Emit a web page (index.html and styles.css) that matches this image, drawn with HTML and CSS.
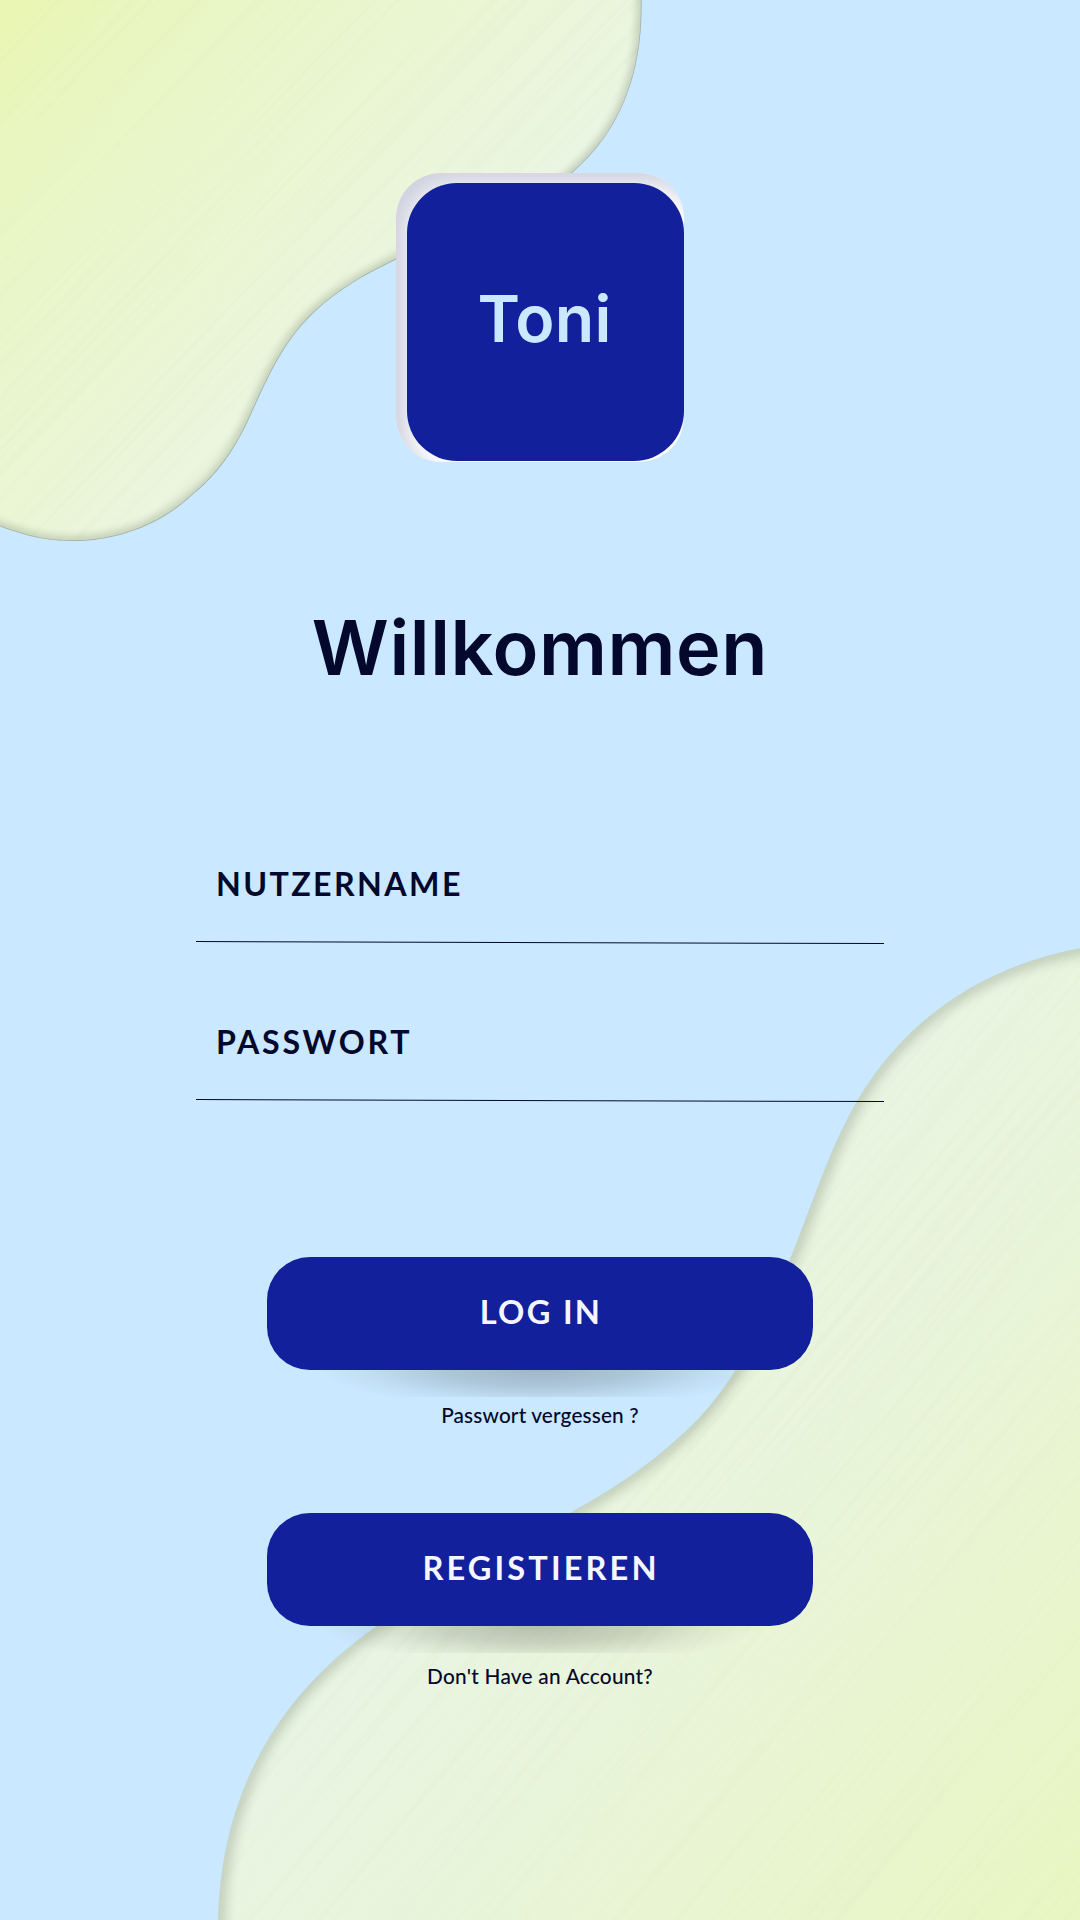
FILE: index.html
```html
<!DOCTYPE html>
<html lang="de">
<head>
  <meta charset="utf-8">
  <title>Toni – Willkommen</title>
  <link rel="stylesheet" href="styles.css">
</head>
<body>
  <svg class="backdrop" viewBox="0 0 1080 1920" aria-hidden="true">
    <defs>
      <linearGradient id="fill-top" gradientUnits="userSpaceOnUse" x1="0" y1="30" x2="390" y2="400">
        <stop offset="0" stop-color="#e9f6b4"/>
        <stop offset=".25" stop-color="#e9f6c4"/>
        <stop offset=".6" stop-color="#ebf6d4"/>
        <stop offset="1" stop-color="#eaf6e5"/>
      </linearGradient>
      <linearGradient id="fill-bottom" gradientUnits="userSpaceOnUse" x1="560" y1="1430" x2="1090" y2="1880">
        <stop offset="0" stop-color="#e9f5e3"/>
        <stop offset=".45" stop-color="#e9f5d6"/>
        <stop offset="1" stop-color="#e8f6c3"/>
      </linearGradient>
      <path id="blob-top" d="M-20 -20 H641.500 V0 C643 72 621 131 572 173 C520 219 447 236 395 260 C361 276 329 295 303.500 323 C276 354 262 391 246 425 C229 459 213 478 191 496 C158 527 113 541 74 541 C48 541 23 537 -20 518 Z"/>
      <path id="blob-bottom" d="M1100 945 C1018 956 948 991 897 1047 C841 1107 823 1178 789 1262 C764 1325 736 1378 700 1417 C660 1458 622 1484 570 1513 C500 1549 434 1582 377 1626 C275 1697 221 1796 218 1920 V1940 H1100 Z"/>
      <clipPath id="clip-top"><use href="#blob-top"/></clipPath>
      <clipPath id="clip-bottom"><use href="#blob-bottom"/></clipPath>
      <filter id="soft-top" x="-10%" y="-10%" width="120%" height="120%"><feGaussianBlur stdDeviation="4"/></filter>
      <filter id="soft-bottom" x="-10%" y="-10%" width="120%" height="120%"><feGaussianBlur stdDeviation="6.500"/></filter>
      <filter id="streaks" x="0" y="0" width="100%" height="100%">
        <feTurbulence type="fractalNoise" baseFrequency="0.0015 0.17" numOctaves="3" seed="7"/>
        <feColorMatrix values="0 0 0 0 .66  0 0 0 0 .74  0 0 0 0 .5  1.600 0 0 0 -.78"/>
      </filter>
    </defs>
    <g clip-path="url(#clip-top)">
      <use href="#blob-top" fill="url(#fill-top)"/>
      <rect class="grain" x="-700" y="-500" width="1400" height="1100" transform="rotate(-46)" filter="url(#streaks)"/>
      <use href="#blob-top" class="rim rim-top" filter="url(#soft-top)"/>
      <use href="#blob-top" class="edge"/>
    </g>
    <g clip-path="url(#clip-bottom)">
      <use href="#blob-bottom" fill="url(#fill-bottom)"/>
      <rect class="grain" x="-800" y="-600" width="1600" height="1200" transform="translate(760 1500) rotate(-50)" filter="url(#streaks)"/>
      <use href="#blob-bottom" class="rim rim-bottom" filter="url(#soft-bottom)"/>
    </g>
  </svg>

  <main class="screen">
    <div class="logo"><div class="logo-face">Toni</div></div>
    <h1 class="title">Willkommen</h1>

    <form class="form">
      <label class="field field-user">Nutzername</label>
      <label class="field field-pass">Passwort</label>

      <button class="button button-login" type="button">Log in</button>
      <a class="hint hint-forgot">Passwort vergessen ?</a>
      <button class="button button-register" type="button">Registieren</button>
      <a class="hint hint-account">Don't Have an Account?</a>
    </form>
  </main>
</body>
</html>
```
FILE: styles.css
```css
* { box-sizing: border-box; }

body {
  margin: 0;
  width: 1080px;
  height: 1920px;
  overflow: hidden;
  position: relative;
  background: #cae8ff;
  color: #03082c;
  font-family: Lato, "Open Sans", sans-serif;
}

.backdrop {
  position: absolute;
  inset: 0;
  width: 1080px;
  height: 1920px;
}

.grain { opacity: .24; }
.rim { fill: none; stroke: #4d5b4b; }
.rim-top { stroke-width: 6px; opacity: .38; }
.rim-bottom { stroke-width: 10px; opacity: .36; }
.edge { fill: none; stroke: #7e8c86; stroke-width: 1.5px; opacity: .5; }

.screen {
  position: relative;
  display: flex;
  flex-direction: column;
  align-items: center;
  padding-top: 173px;
}

.logo {
  width: 288px;
  height: 289px;
  padding: 10px 0 1px 11px;
  border-radius: 45px;
  background: #fff;
  box-shadow: inset 12px 12px 20px #d0d2df;
}

.logo-face {
  height: 278px;
  border-radius: 50px;
  background: #12219b;
  color: #cae8ff;
  font: 600 64.5px/273px Inter, sans-serif;
  letter-spacing: .2px;
  text-align: center;
  padding-right: 2px;
}

.title {
  margin: 136px 0 0;
  font: 600 75.5px/100px Inter, sans-serif;
  letter-spacing: .6px;
}

.form {
  width: 688px;
  display: flex;
  flex-direction: column;
  align-items: center;
}

.field {
  position: relative;
  align-self: stretch;
  height: 158px;
  padding: 80px 0 0 20px;
  font-size: 32.2px;
  font-weight: 700;
  line-height: 40px;
  text-transform: uppercase;
  letter-spacing: 2.4px;
}

.field-user { margin-top: 86px; }
.field-pass { letter-spacing: 2.7px; }

/* slightly slanted rule under each field */
.field::after {
  content: "";
  position: absolute;
  left: 0;
  right: 0;
  bottom: -1px;
  height: 1.3px;
  background: #03082c;
  transform: rotate(.17deg);
}

.button {
  position: relative;
  width: 546px;
  height: 112.5px;
  padding: 0 0 2px 2px;
  border: 0;
  border-radius: 43px;
  background: #12219b;
  color: #f5f6ff;
  font: 700 32.6px/108px Lato, sans-serif;
  text-transform: uppercase;
  letter-spacing: 2.3px;
}

.button-login { margin-top: 157px; }
.button-register { margin-top: 73px; letter-spacing: 3.1px; }

.button::after {
  content: "";
  position: absolute;
  top: 100%;
  left: 50px;
  right: 50px;
  height: 27px;
  background: radial-gradient(222px 38px at 50% 0, rgba(0, 0, 0, .22), rgba(0, 0, 0, .14) 45%, rgba(0, 0, 0, .05) 75%, transparent);
}

.hint {
  position: relative;
  font-size: 20.8px;
  font-weight: 500;
  line-height: 30px;
  letter-spacing: .15px;
}

.hint-forgot { margin-top: 30.500px; height: 40px; }
.hint-account { margin-top: 35.500px; letter-spacing: .25px; }
```
